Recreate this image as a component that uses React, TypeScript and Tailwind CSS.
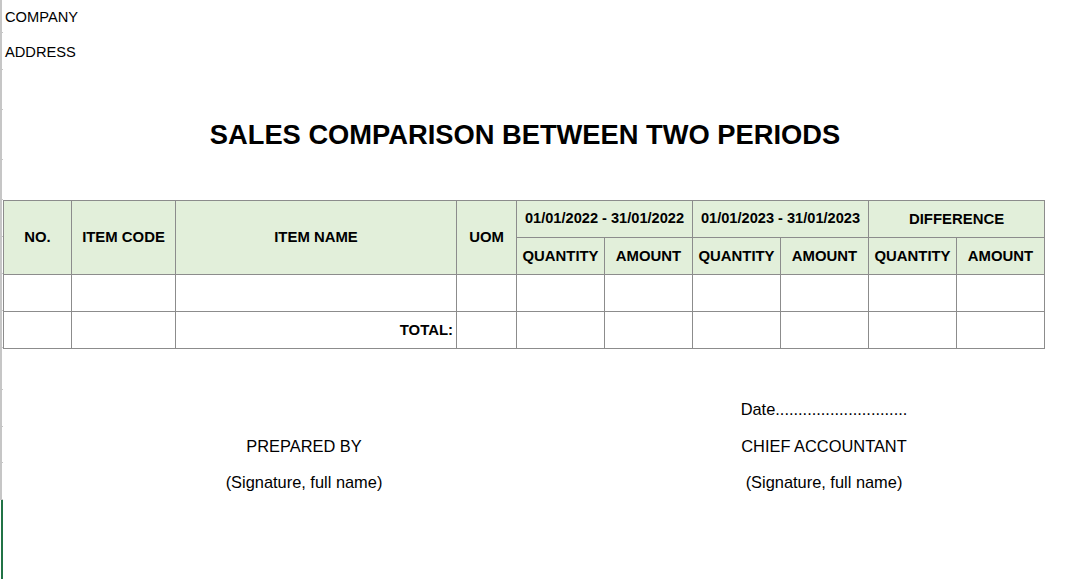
const font = { fontFamily: '"Liberation Sans", Arial, sans-serif' };

// heights of the sheet rows, top to bottom (px)
const railRows = [33, 37, 40, 50, 40, 37, 37, 37, 37, 42, 37, 36, 37];

const subCols = ["QUANTITY", "AMOUNT", "QUANTITY", "AMOUNT", "QUANTITY", "AMOUNT"];

function Rail() {
  return (
    <div className="flex w-[3px] flex-col">
      {railRows.map((h, i) => (
        <div
          key={i}
          className="border-b border-l-2 border-[#c6c6c6]"
          style={{ height: h }}
        />
      ))}
      <div className="ml-px flex-1 border-l-2 border-[#217346]" />
    </div>
  );
}

function DataRow({ total }: { total?: boolean }) {
  return (
    <tr className="h-[37px]">
      <td className="border border-[#8c8c8c]" />
      <td className="border border-[#8c8c8c]" />
      <td className="border border-[#8c8c8c] pr-[3px] text-right text-[14.9px] font-bold">
        {total ? "TOTAL:" : ""}
      </td>
      <td className="border border-[#8c8c8c]" />
      {subCols.map((_, i) => (
        <td key={i} className="border border-[#8c8c8c]" />
      ))}
    </tr>
  );
}

export default function App() {
  return (
    <div className="flex h-[579px] w-[1070px] overflow-hidden bg-white text-black" style={font}>
      <Rail />
      <div className="flex w-[1041px] flex-col">
        <div className="flex h-[33px] items-center pl-[2px] text-[14.67px]">COMPANY</div>
        <div className="flex h-[37px] items-center pl-[2px] text-[14.67px]">ADDRESS</div>
        <div className="h-[40px]" />
        <div className="flex h-[50px] items-center justify-center pl-[3px] text-[27.3px] font-bold">
          SALES COMPARISON BETWEEN TWO PERIODS
        </div>
        <div className="h-[40px]" />

        <table className="w-[1042px] table-fixed border-collapse text-center text-[14.9px] font-bold">
          <colgroup>
            <col className="w-[68px]" />
            <col className="w-[104px]" />
            <col className="w-[281px]" />
            <col className="w-[60px]" />
            {subCols.map((_, i) => (
              <col key={i} className="w-[88px]" />
            ))}
          </colgroup>
          <thead className="bg-[#e2efda]">
            <tr className="h-[37px]">
              <th rowSpan={2} className="border border-[#8c8c8c]">NO.</th>
              <th rowSpan={2} className="border border-[#8c8c8c]">ITEM CODE</th>
              <th rowSpan={2} className="border border-[#8c8c8c]">ITEM NAME</th>
              <th rowSpan={2} className="border border-[#8c8c8c]">UOM</th>
              <th colSpan={2} className="border border-[#8c8c8c] text-[14.6px]">01/01/2022 - 31/01/2022</th>
              <th colSpan={2} className="border border-[#8c8c8c] text-[14.6px]">01/01/2023 - 31/01/2023</th>
              <th colSpan={2} className="border border-[#8c8c8c]">DIFFERENCE</th>
            </tr>
            <tr className="h-[37px]">
              {subCols.map((c, i) => (
                <th key={i} className="border border-[#8c8c8c]">{c}</th>
              ))}
            </tr>
          </thead>
          <tbody>
            <DataRow />
            <DataRow total />
          </tbody>
        </table>

        <div className="h-[42px]" />
        <div className="flex text-[16.4px]">
          <div className="ml-[101px] flex w-[400px] flex-col items-center">
            <div className="h-[37px]" />
            <div className="flex h-[36px] items-center">PREPARED BY</div>
            <div className="flex h-[37px] items-center">(Signature, full name)</div>
          </div>
          <div className="ml-[120px] flex w-[400px] flex-col items-center">
            <div className="flex h-[37px] items-center">Date.............................</div>
            <div className="flex h-[36px] items-center">CHIEF ACCOUNTANT</div>
            <div className="flex h-[37px] items-center">(Signature, full name)</div>
          </div>
        </div>
      </div>
    </div>
  );
}
